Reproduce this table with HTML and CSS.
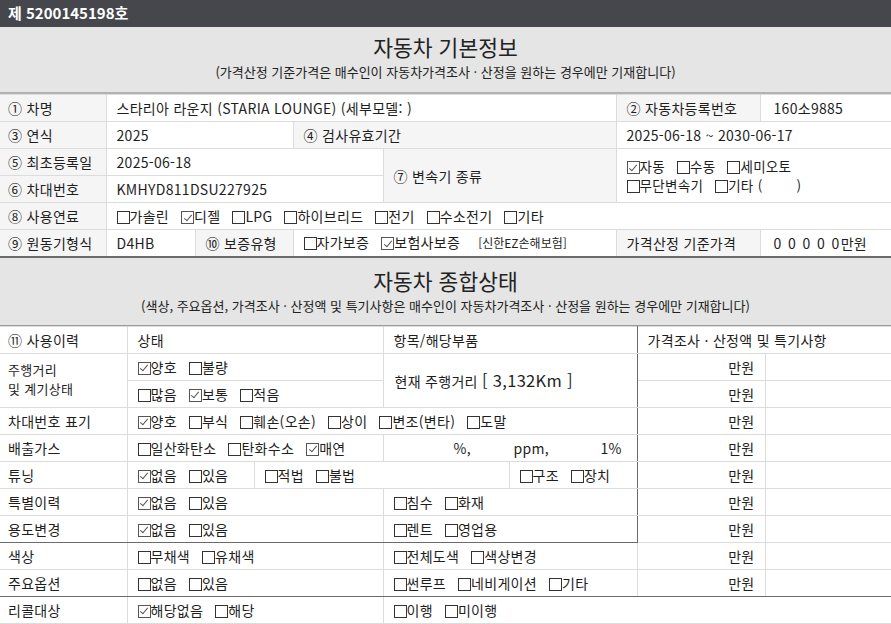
FILE: index.html
```html
<!DOCTYPE html>
<html lang="ko">
<head>
<meta charset="utf-8">
<title>자동차 성능상태점검</title>
<link rel="stylesheet" href="styles.css">
</head>
<body>
<div class="topbar">제 5200145198호</div>

<div class="sechead s1">
  <h2 class="title">자동차 기본정보</h2>
  <p class="sub">(가격산정 기준가격은 매수인이 자동차가격조사 · 산정을 원하는 경우에만 기재합니다)</p>
</div>

<table class="t1">
  <colgroup>
    <col class="a1"><col class="a2"><col class="a3"><col class="a4"><col class="a5"><col class="a6"><col class="a7">
  </colgroup>
  <tr>
    <td class="lb first">① 차명</td>
    <td colspan="4">스타리아 라운지 (STARIA LOUNGE) (세부모델: )</td>
    <td class="lb">② 자동차등록번호</td>
    <td class="v2 last">160소9885</td>
  </tr>
  <tr>
    <td class="lb first">③ 연식</td>
    <td colspan="2">2025</td>
    <td colspan="2" class="lb">④ 검사유효기간</td>
    <td colspan="2" class="last">2025-06-18 ~ 2030-06-17</td>
  </tr>
  <tr>
    <td class="lb first">⑤ 최초등록일</td>
    <td colspan="3">2025-06-18</td>
    <td rowspan="2" class="lb">⑦ 변속기 종류</td>
    <td colspan="2" rowspan="2" class="last two">
      <span class="opt"><i class="cb on"></i>자동</span><span class="opt"><i class="cb"></i>수동</span><span class="opt"><i class="cb"></i>세미오토</span><br>
      <span class="opt"><i class="cb"></i>무단변속기</span><span class="opt"><i class="cb"></i>기타 (<span class="gap"></span>)</span>
    </td>
  </tr>
  <tr>
    <td class="lb first">⑥ 차대번호</td>
    <td colspan="3">KMHYD811DSU227925</td>
  </tr>
  <tr>
    <td class="lb first">⑧ 사용연료</td>
    <td colspan="6" class="last">
      <span class="opt"><i class="cb"></i>가솔린</span><span class="opt"><i class="cb on"></i>디젤</span><span class="opt"><i class="cb"></i>LPG</span><span class="opt"><i class="cb"></i>하이브리드</span><span class="opt"><i class="cb"></i>전기</span><span class="opt"><i class="cb"></i>수소전기</span><span class="opt"><i class="cb"></i>기타</span>
    </td>
  </tr>
  <tr>
    <td class="lb first">⑨ 원동기형식</td>
    <td>D4HB</td>
    <td class="lb">⑩ 보증유형</td>
    <td colspan="2"><span class="opt"><i class="cb"></i>자가보증</span><span class="opt"><i class="cb on"></i>보험사보증</span><span class="ins">[신한EZ손해보험]</span></td>
    <td class="lb">가격산정 기준가격</td>
    <td class="v2 last"><span class="zeros">0 0 0 0 0</span>만원</td>
  </tr>
</table>

<div class="sechead s2">
  <h2 class="title">자동차 종합상태</h2>
  <p class="sub">(색상, 주요옵션, 가격조사 · 산정액 및 특기사항은 매수인이 자동차가격조사 · 산정을 원하는 경우에만 기재합니다)</p>
</div>

<table class="t2">
  <colgroup>
    <col class="b1"><col class="b2"><col class="b3"><col class="b4"><col class="b5"><col class="b6"><col class="b7">
  </colgroup>
  <tr>
    <td class="first">⑪ 사용이력</td>
    <td colspan="2">상태</td>
    <td colspan="2" class="dkr">항목/해당부품</td>
    <td colspan="2" class="last">가격조사 · 산정액 및 특기사항</td>
  </tr>
  <tr>
    <td rowspan="2" class="first ml">주행거리<br>및 계기상태</td>
    <td colspan="2"><span class="opt"><i class="cb on"></i>양호</span><span class="opt"><i class="cb"></i>불량</span></td>
    <td colspan="2" rowspan="2" class="dkr km">현재 주행거리 <span class="big">[ 3,132Km ]</span></td>
    <td class="won">만원</td>
    <td class="last"></td>
  </tr>
  <tr>
    <td colspan="2"><span class="opt"><i class="cb"></i>많음</span><span class="opt"><i class="cb on"></i>보통</span><span class="opt"><i class="cb"></i>적음</span></td>
    <td class="won">만원</td>
    <td class="last"></td>
  </tr>
  <tr>
    <td class="first">차대번호 표기</td>
    <td colspan="4" class="dkr"><span class="opt"><i class="cb on"></i>양호</span><span class="opt"><i class="cb"></i>부식</span><span class="opt"><i class="cb"></i>훼손(오손)</span><span class="opt"><i class="cb"></i>상이</span><span class="opt"><i class="cb"></i>변조(변타)</span><span class="opt"><i class="cb"></i>도말</span></td>
    <td class="won">만원</td>
    <td class="last"></td>
  </tr>
  <tr>
    <td class="first">배출가스</td>
    <td colspan="2"><span class="opt"><i class="cb"></i>일산화탄소</span><span class="opt"><i class="cb"></i>탄화수소</span><span class="opt"><i class="cb on"></i>매연</span></td>
    <td colspan="2" class="dkr units"><span class="u u1">%,</span><span class="u u2">ppm,</span><span class="u">1%</span></td>
    <td class="won">만원</td>
    <td class="last"></td>
  </tr>
  <tr>
    <td class="first">튜닝</td>
    <td><span class="opt"><i class="cb on"></i>없음</span><span class="opt"><i class="cb"></i>있음</span></td>
    <td colspan="2"><span class="opt"><i class="cb"></i>적법</span><span class="opt"><i class="cb"></i>불법</span></td>
    <td class="dkr"><span class="opt"><i class="cb"></i>구조</span><span class="opt"><i class="cb"></i>장치</span></td>
    <td class="won">만원</td>
    <td class="last"></td>
  </tr>
  <tr>
    <td class="first">특별이력</td>
    <td colspan="2"><span class="opt"><i class="cb on"></i>없음</span><span class="opt"><i class="cb"></i>있음</span></td>
    <td colspan="2" class="dkr"><span class="opt"><i class="cb"></i>침수</span><span class="opt"><i class="cb"></i>화재</span></td>
    <td class="won">만원</td>
    <td class="last"></td>
  </tr>
  <tr class="dkb-left">
    <td class="first">용도변경</td>
    <td colspan="2"><span class="opt"><i class="cb on"></i>없음</span><span class="opt"><i class="cb"></i>있음</span></td>
    <td colspan="2" class="dkr"><span class="opt"><i class="cb"></i>렌트</span><span class="opt"><i class="cb"></i>영업용</span></td>
    <td class="won lite">만원</td>
    <td class="last lite"></td>
  </tr>
  <tr>
    <td class="first">색상</td>
    <td colspan="2"><span class="opt"><i class="cb"></i>무채색</span><span class="opt"><i class="cb"></i>유채색</span></td>
    <td colspan="2"><span class="opt"><i class="cb"></i>전체도색</span><span class="opt"><i class="cb"></i>색상변경</span></td>
    <td class="won">만원</td>
    <td class="last"></td>
  </tr>
  <tr class="dkb">
    <td class="first">주요옵션</td>
    <td colspan="2"><span class="opt"><i class="cb"></i>없음</span><span class="opt"><i class="cb"></i>있음</span></td>
    <td colspan="2"><span class="opt"><i class="cb"></i>썬루프</span><span class="opt"><i class="cb"></i>네비게이션</span><span class="opt"><i class="cb"></i>기타</span></td>
    <td class="won">만원</td>
    <td class="last"></td>
  </tr>
  <tr>
    <td class="first">리콜대상</td>
    <td colspan="2"><span class="opt"><i class="cb on"></i>해당없음</span><span class="opt"><i class="cb"></i>해당</span></td>
    <td colspan="4" class="last"><span class="opt"><i class="cb"></i>이행</span><span class="opt"><i class="cb"></i>미이행</span></td>
  </tr>
</table>
</body>
</html>
```

FILE: styles.css
```css
* { box-sizing: border-box; }

body {
  margin: 0;
  width: 891px;
  font-family: "Noto Sans CJK KR", "Liberation Sans", sans-serif;
  font-size: 14px;
  letter-spacing: 0.3px;
  color: #1e1e1e;
  background: #fff;
}

.topbar {
  height: 27px;
  background: #45474d;
  color: #fff;
  font-weight: bold;
  font-size: 15px;
  letter-spacing: 0;
  line-height: 25px;
  padding-left: 8px;
}

.sechead {
  background: #e4e5e4;
  text-align: center;
  border-bottom: 2px solid #b2b2b2;
  letter-spacing: 0;
}
.sechead .title {
  margin: 0;
  font-size: 21.5px;
  font-weight: normal;
  line-height: 26px;
  color: #222;
}
.sechead .sub {
  margin: 0;
  font-size: 13px;
  line-height: 16px;
  color: #222;
}
.s1 { height: 67px; padding-top: 7px; }
.s1 .sub { margin-top: 4px; }
.s2 { height: 68px; padding-top: 10px; border-bottom: 1px solid #9a9a9a; }
.s2 .sub { margin-top: 4px; }

table {
  width: 891px;
  border-collapse: collapse;
  table-layout: fixed;
}
td {
  border: 1px solid #dcdcdc;
  height: 27px;
  padding: 0 10px;
  white-space: nowrap;
  line-height: 16px;
  vertical-align: middle;
  overflow: hidden;
}
td.first { border-left: none; padding-left: 8px; }
td.last { border-right: none; }

.t1 { border-bottom: 2px solid #6b6b6b; }
.t1 .a1 { width: 106px; }
.t1 .a2 { width: 89px; }
.t1 .a3 { width: 98px; }
.t1 .a4 { width: 90px; }
.t1 .a5 { width: 233px; }
.t1 .a6 { width: 144px; }
.t1 .a7 { width: 131px; }

.lb { background: #f5f5f5; }
.v2 { padding-left: 13px; }
td.two { font-size: 13.5px; line-height: 19px; padding-top: 1px; }

.t2 .b1 { width: 127px; }
.t2 .b2 { width: 127px; }
.t2 .b3 { width: 129px; }
.t2 .b4 { width: 126px; }
.t2 .b5 { width: 128px; }
.t2 .b6 { width: 128px; }
.t2 .b7 { width: 126px; }

td.ml { font-size: 13px; line-height: 19px; padding-bottom: 3px; }
td.dkr { border-right: 1px solid #6b6b6b; }
.dkb-left td { border-bottom: 1px solid #6b6b6b; }
.dkb-left td.lite { border-bottom: 1px solid #dcdcdc; }
.dkb td { border-bottom: 1px solid #6b6b6b; }

td.won { text-align: right; }
td.km { padding-left: 11px; }
.big { font-size: 16.5px; }

td.units { padding-left: 70px; }
.u { display: inline-block; }
.u1 { width: 60px; }
.u2 { width: 87px; }

.opt { display: inline-block; margin-right: 12px; }
.cb {
  display: inline-block;
  position: relative;
  width: 13px;
  height: 13px;
  border: 1px solid #333;
  background: #fff;
  vertical-align: -2px;
}
.cb.on { border-color: #555; }
.cb.on::after {
  content: "";
  position: absolute;
  left: 3.5px;
  top: 0.5px;
  width: 3px;
  height: 7px;
  border: solid #555;
  border-width: 0 1.5px 1.5px 0;
  transform: rotate(40deg);
}

.gap { display: inline-block; width: 34px; }
.ins { font-size: 12px; margin-left: 6px; letter-spacing: 0; }
.zeros { letter-spacing: 1.4px; }
```
